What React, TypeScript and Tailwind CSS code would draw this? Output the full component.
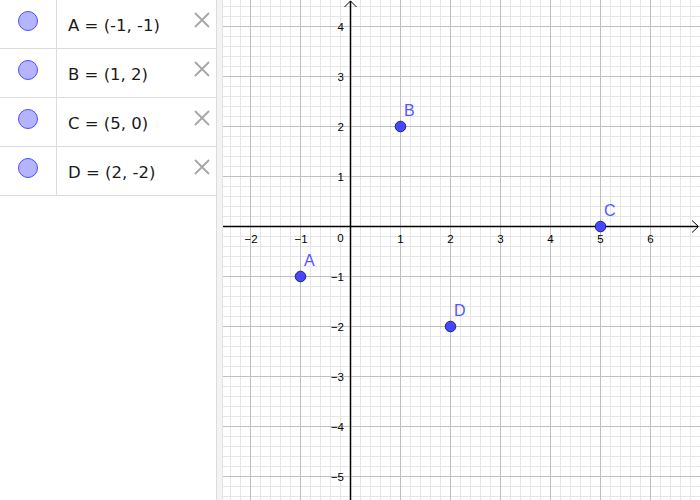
import React from "react";

const rows = [
  { name: "A", value: "(-1, -1)" },
  { name: "B", value: "(1, 2)" },
  { name: "C", value: "(5, 0)" },
  { name: "D", value: "(2, -2)" },
];

const OX = 350;
const OY = 226;
const U = 50;

function Graph() {
  const minorX: number[] = [];
  const majorX: number[] = [];
  for (let x = 230; x <= 700; x += 10) {
    if ((x - OX) % 50 === 0) majorX.push(x);
    else minorX.push(x);
  }
  const minorY: number[] = [];
  const majorY: number[] = [];
  for (let y = 6; y <= 500; y += 10) {
    if ((y - OY) % 50 === 0) majorY.push(y);
    else minorY.push(y);
  }
  const xTicks = [-2, -1, 1, 2, 3, 4, 5, 6];
  const yTicks = [4, 3, 2, 1, -1, -2, -3, -4, -5];
  const pts = [
    { n: "A", x: -1, y: -1 },
    { n: "B", x: 1, y: 2 },
    { n: "C", x: 5, y: 0 },
    { n: "D", x: 2, y: -2 },
  ];
  const fmt = (v: number) => (v < 0 ? "\u2212" + Math.abs(v) : String(v));
  return (
    <svg width={477} height={500} viewBox="223 0 477 500" className="block">
      <rect x={223} y={0} width={477} height={500} fill="#ffffff" />
      {minorX.map((x) => (
        <line key={"mx" + x} x1={x + 0.5} y1={0} x2={x + 0.5} y2={500} stroke="#e6e6e6" strokeWidth={1} />
      ))}
      {minorY.map((y) => (
        <line key={"my" + y} x1={223} y1={y + 0.5} x2={700} y2={y + 0.5} stroke="#e6e6e6" strokeWidth={1} />
      ))}
      {majorX.map((x) => (
        <line key={"Mx" + x} x1={x + 0.5} y1={0} x2={x + 0.5} y2={500} stroke="#c0c0c0" strokeWidth={1} />
      ))}
      {majorY.map((y) => (
        <line key={"My" + y} x1={223} y1={y + 0.5} x2={700} y2={y + 0.5} stroke="#c0c0c0" strokeWidth={1} />
      ))}
      {/* axes */}
      <line x1={223} y1={OY + 0.5} x2={698} y2={OY + 0.5} stroke="#000" strokeWidth={1.5} />
      <line x1={OX + 0.5} y1={1} x2={OX + 0.5} y2={500} stroke="#000" strokeWidth={1.5} />
      <polyline points="692,220.5 698.5,226.5 692,232.5" fill="none" stroke="#000" strokeWidth={1} />
      <polyline points="344.5,7 350.5,1 356.5,7" fill="none" stroke="#000" strokeWidth={1} />
      {/* tick labels */}
      <g fontFamily="'Liberation Sans', Arial, sans-serif" fontSize={11.5} fill="#000">
        {xTicks.map((v) => (
          <text key={"xt" + v} x={OX + v * U + (v < 0 ? 1 : 0.5)} y={OY + 17} textAnchor="middle">
            {fmt(v)}
          </text>
        ))}
        <text x={340.5} y={OY + 16} textAnchor="middle">0</text>
        {yTicks.map((v) => (
          <text key={"yt" + v} x={344} y={OY - v * U + 4.5} textAnchor="end">
            {fmt(v)}
          </text>
        ))}
      </g>
      {pts.map((p) => {
        const cx = OX + p.x * U;
        const cy = OY - p.y * U;
        return (
          <g key={p.n}>
            <circle cx={cx + 0.5} cy={cy + 0.5} r={5.3} fill="#4646ff" stroke="#1f1f7a" strokeWidth={1} />
            <text
              x={cx + 4}
              y={cy - 10}
              fontFamily="'Liberation Sans', Arial, sans-serif"
              fontSize={16}
              fill="#5555ff"
            >
              {p.n}
            </text>
          </g>
        );
      })}
    </svg>
  );
}

export default function App() {
  return (
    <div className="flex w-[700px] h-[500px] overflow-hidden bg-white">
      <div className="w-[217px] h-full border-r border-[#dcdcdc] bg-white flex flex-col shrink-0">
        {rows.map((r) => (
          <div key={r.name} className="flex h-[49px] border-b border-[#dcdcdc] shrink-0">
            <div className="w-[57px] shrink-0 border-r border-[#dcdcdc] flex justify-center pt-[11px]">
              <div className="w-[20px] h-[20px] rounded-full bg-[#b4b4ff] border border-[#4d4dff]" />
            </div>
            <div className="flex-1 relative">
              <div
                className="absolute left-[11px] top-[14px] text-[16.5px] text-[#1a1a1a] whitespace-pre"
                style={{ fontFamily: "'DejaVu Sans', sans-serif" }}
              >
                {r.name} = {r.value}
              </div>
              <svg className="absolute right-[6px] top-[12px]" width={16} height={16} viewBox="0 0 16 16">
                <path d="M1 1 L15 15 M15 1 L1 15" stroke="#a6a6a6" strokeWidth={1.8} />
              </svg>
            </div>
          </div>
        ))}
      </div>
      <div className="w-[6px] h-full bg-[#f3f3f3] border-r border-[#e4e4e4] shrink-0" />
      <div className="flex-1 h-full overflow-hidden">
        <Graph />
      </div>
    </div>
  );
}
